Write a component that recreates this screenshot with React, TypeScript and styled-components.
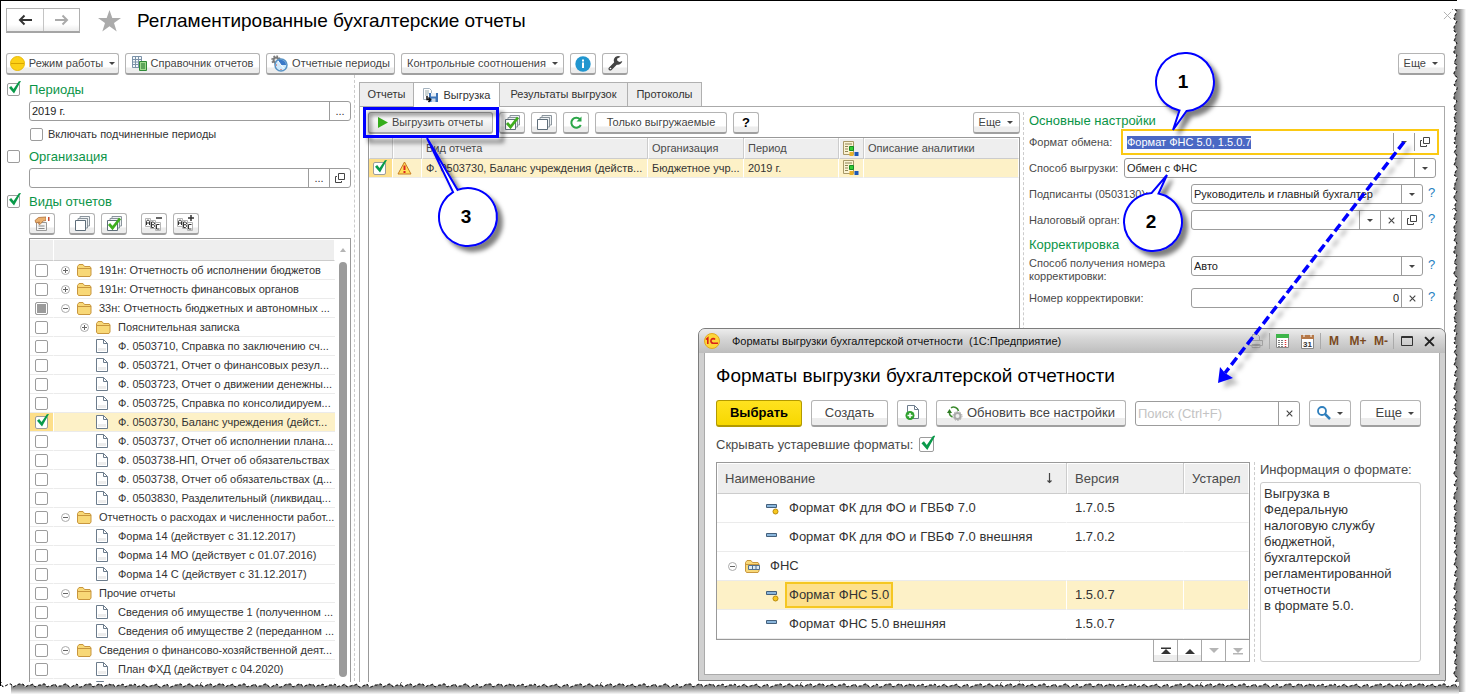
import React, { useEffect, useRef } from 'react';
import styled, { createGlobalStyle, css } from 'styled-components';

const GlobalStyle = createGlobalStyle`
  * { box-sizing: border-box; }
  body {
    margin: 0;
    background: #fff;
    color: #333;
    font: 11px/13px "Liberation Sans", Arial, sans-serif;
  }
  button, input, select, textarea { font: inherit; color: inherit; margin: 0; }
  svg { display: block; flex: none; }
`;

/* ---------- shell ---------- */

const Page = styled.div`
  position: relative;
  height: 100vh;
  overflow: hidden;
`;

const Sheet = styled.div`
  display: flex;
  flex-direction: column;
  height: calc(100% - 9px);
  margin-right: 9px;
  border-top: 1px solid #000;
  border-left: 1px solid #000;
  overflow: hidden;
`;

const Header = styled.header`
  display: flex;
  align-items: center;
  height: 39px;
  margin-bottom: 13px;
  padding: 0 5px;
`;

const NavGroup = styled.div`
  display: flex;
  height: 25px;
  margin-right: 18px;
  border: 1px solid #b0b0b0;
  border-bottom: 2px solid #a5a5a5;
`;

const NavButton = styled.button`
  width: 36px;
  padding: 0;
  display: grid;
  place-items: center;
  border: 0;
  background: linear-gradient(#fff 70%, #ececec);
  & + & { border-left: 1px solid #c4c4c4; }
`;

const PageTitle = styled.h1`
  flex: 1;
  margin: 0 0 0 16px;
  font-size: 19px;
  line-height: 24px;
  font-weight: normal;
  color: #000;
`;

const CloseButton = styled.button`
  align-self: flex-start;
  margin-top: 10px;
  padding: 0;
  border: 0;
  background: none;
`;

const Toolbar = styled.div<{ $gap?: number; $padding?: string }>`
  display: flex;
  flex: none;
  gap: ${p => p.$gap ?? 6}px;
  padding: ${p => p.$padding ?? '0'};
`;

const Spacer = styled.div`
  flex: 1;
`;

const Button = styled.button<{ $width?: number; $large?: boolean; $primary?: boolean; $pressed?: boolean }>`
  display: flex;
  flex: none;
  align-items: center;
  justify-content: center;
  gap: 4px;
  width: ${p => p.$width ?? 26}px;
  height: ${p => (p.$large ? 27 : 22)}px;
  padding: 0;
  white-space: nowrap;
  color: #444;
  border: 1px solid #b4b4b4;
  border-bottom: 2px solid #a0a0a0;
  border-radius: 3px;
  background: linear-gradient(#fff 70%, #ededed 72%);
  font-size: ${p => (p.$large ? 13 : 11)}px;
  ${p => p.$primary && css`
    color: #000;
    font-weight: bold;
    border-color: #b39a00;
    background: linear-gradient(#ffe21f, #f7d800);
  `}
  ${p => p.$pressed && css`
    background: linear-gradient(#e6e6e6, #fafafa 30%, #e2e2e2);
    border-color: #a8a8a8;
  `}
`;

const MoreButton = styled(Button)`
  justify-content: flex-end;
  padding-right: 6px;
`;

const Caret = styled.span`
  width: 0;
  height: 0;
  margin-left: 2px;
  border: 3px solid transparent;
  border-top-color: #444;
  border-bottom: 0;
`;

const Body = styled.main`
  display: flex;
  flex: 1;
  min-height: 0;
`;

/* ---------- filter column ---------- */

const Filters = styled.aside`
  display: flex;
  flex: none;
  flex-direction: column;
  width: 354px;
  padding: 5px 3px 0 6px;
  border-right: 1px dashed #ccc;
`;

const Indented = styled.div`
  display: flex;
  flex: none;
  flex-direction: column;
  margin-left: 22px;
  gap: 4px;
`;

const CheckLabel = styled.label<{ $heading?: boolean }>`
  display: flex;
  flex: none;
  align-items: center;
  height: 18px;
  gap: ${p => (p.$heading ? 9 : 5)}px;
  padding-left: ${p => (p.$heading ? 0 : 1)}px;
  ${p => p.$heading && css`
    color: #0a9447;
    font-size: 13px;
    margin-bottom: 3px;
    * + & { margin-top: 4px; }
  `}
`;

const Check = styled.input.attrs({ type: 'checkbox' })<{ $big?: boolean; $partial?: boolean }>`
  appearance: none;
  position: relative;
  flex: none;
  width: ${p => (p.$big ? 15 : 13)}px;
  height: ${p => (p.$big ? 15 : 13)}px;
  border: 1px solid #9c9c9c;
  border-radius: 2px;
  background: ${p => (p.$partial ? '#9b9b9b' : '#fff')};
  box-shadow: ${p => (p.$partial ? 'inset 0 0 0 1px #fff' : 'none')};
  &:checked::after {
    content: '';
    position: absolute;
    inset: -3px -2px 1px 1px;
    background: #0a9a4a;
    clip-path: polygon(0 55%, 18% 42%, 38% 66%, 82% 6%, 100% 4%, 42% 100%);
  }
`;

const Field = styled.div<{ $focus?: boolean }>`
  display: flex;
  flex: 1 1 auto;
  min-width: 0;
  height: 20px;
  border: 1px solid ${p => (p.$focus ? 'transparent' : '#9c9c9c')};
  border-radius: ${p => (p.$focus ? 0 : 3)}px;
  background: #fff;
  outline: ${p => (p.$focus ? '2px solid #fbc913' : 'none')};
  outline-offset: 1px;
`;

const textControl = css`
  flex: 1;
  min-width: 0;
  width: 0;
  padding: 0 2px;
  border: 0;
  outline: 0;
  background: none;
  color: #222;
`;

const TextInput = styled.input<{ $right?: boolean }>`
  ${textControl}
  text-align: ${p => (p.$right ? 'right' : 'left')};
  &::selection { background: #4a68c4; color: #fff; }
  &::placeholder { color: #c3c3c3; opacity: 1; }
`;

const Select = styled.select`
  ${textControl}
  appearance: none;
`;

const FieldButton = styled.button`
  display: grid;
  flex: none;
  place-items: center;
  width: 21px;
  padding: 0;
  border: 0;
  border-left: 1px solid #9c9c9c;
  background: none;
  color: #333;
  ${Caret} { margin: 0; }
`;

const TreeBox = styled.div`
  display: flex;
  flex: 1 0 auto;
  margin: 3px 0 0 22px;
  border: 1px solid #999;
  border-bottom: 0;
  height: 0;
`;

const TreeTable = styled.table`
  flex: 1;
  align-self: flex-start;
  table-layout: fixed;
  border-collapse: separate;
  border-spacing: 0;
  white-space: nowrap;
  th {
    height: 22px;
    padding: 0;
    background: #eee;
    border: 1px solid #fff;
    border-bottom: 1px solid #ccc;
    border-left: 0;
  }
  th:first-child { width: 24px; box-shadow: 1px 0 #ccc; }
  td {
    height: 19px;
    padding: 0;
    overflow: hidden;
    border-bottom: 1px solid #ebebeb;
  }
`;

const TreeRow = styled.tr<{ $selected?: boolean }>`
  background: ${p => (p.$selected ? '#fdf1c7' : 'transparent')};
  td:first-child {
    padding-left: 5px;
    border-right: 1px solid #fff;
    background: ${p => (p.$selected ? '#fddf8a' : 'transparent')};
  }
`;

const TreeCell = styled.div<{ $level: number }>`
  display: flex;
  align-items: center;
  height: 18px;
  padding-left: ${p => 7 + p.$level * 19}px;
`;

const Slot = styled.span<{ $width: number }>`
  flex: none;
  width: ${p => p.$width}px;
`;

const CheckHolder = styled.div`
  display: flex;
  align-items: center;
  height: 18px;
`;

const Scrollbar = styled.div`
  display: flex;
  flex: none;
  flex-direction: column;
  align-items: center;
  gap: 10px;
  width: 15px;
  padding: 9px 0 0;
`;

const ScrollUp = styled.span`
  border: 3px solid transparent;
  border-top: 0;
  border-bottom: 4px solid #b5b5b5;
`;

const ScrollThumb = styled.span`
  flex: 1;
  width: 8px;
  margin-bottom: 9px;
  border-radius: 4px;
  background: #9b9b9b;
`;

/* ---------- tabs and work area ---------- */

const Workspace = styled.section`
  display: flex;
  flex: 1;
  flex-direction: column;
  min-width: 0;
  margin: 7px 12px 0 4px;
`;

const TabList = styled.div`
  display: flex;
  flex: none;
  height: 24px;
`;

const Tab = styled.button<{ $active?: boolean; $width: number }>`
  display: flex;
  align-items: center;
  justify-content: center;
  gap: 6px;
  width: ${p => p.$width}px;
  height: ${p => (p.$active ? 25 : 24)}px;
  padding: 0;
  border: 1px solid #b0b0b0;
  border-bottom: 0;
  margin-left: -1px;
  background: ${p => (p.$active ? '#fff' : '#eee')};
  color: #333;
  z-index: ${p => (p.$active ? 1 : 0)};
  &:first-child { margin-left: 0; }
`;

const TabPanel = styled.div`
  display: flex;
  flex: 1;
  min-height: 0;
  border: 1px solid #aaa;
  border-bottom: 0;
`;

const Work = styled.div`
  display: flex;
  flex: 1;
  flex-direction: column;
  min-width: 0;
  margin-top: 5px;
  padding: 0 3px 0 8px;
  border-right: 1px dashed #ccc;
`;

const GridBox = styled.div<{ $open?: boolean }>`
  flex: ${p => (p.$open ? 1 : 'none')};
  border: 1px solid #999;
  border-bottom-width: ${p => (p.$open ? 0 : 1)}px;
`;

const DataTable = styled.table<{ $large?: boolean }>`
  width: 100%;
  table-layout: fixed;
  border-collapse: separate;
  border-spacing: 0;
  white-space: nowrap;
  font-size: ${p => (p.$large ? 13 : 11)}px;
  th, td { overflow: hidden; text-align: left; }
  th {
    height: ${p => (p.$large ? 31 : 21)}px;
    padding: 0 ${p => (p.$large ? 7 : 3)}px;
    font-weight: normal;
    color: #4a4a4a;
    background: #eee;
    border: 1px solid #fff;
    border-bottom-color: #ccc;
  }
  th + th { box-shadow: -1px 0 #ccc; }
  td {
    height: ${p => (p.$large ? 29 : 19)}px;
    padding: 0 ${p => (p.$large ? 8 : 3)}px 0 4px;
    border-right: 1px solid transparent;
    border-bottom: 1px solid #ebebeb;
  }
  td:not(:first-child) { padding-left: ${p => (p.$large ? 8 : 4)}px; }
`;

const Col = styled.col<{ $width?: number }>`
  width: ${p => (p.$width ? `${p.$width}px` : 'auto')};
`;

const DataRow = styled.tr<{ $selected?: boolean }>`
  ${p => p.$selected && css`
    td { background: #fdf1c7; border-right-color: #fff; }
  `}
`;

const MarkCell = styled.td`
  && { background: #fddf8a; }
`;

const HeadContent = styled.span`
  display: flex;
  justify-content: space-between;
  padding-right: 6px;
`;

/* ---------- settings ---------- */

const Settings = styled.form`
  display: flex;
  flex: none;
  flex-direction: column;
  gap: 6px;
  width: 420px;
  padding: 5px 8px 0 5px;
`;

const SettingsHeading = styled.h2`
  margin: 0 0 -4px;
  font-size: 13px;
  line-height: 18px;
  font-weight: normal;
  color: #0a9447;
`;

const SettingRow = styled.div`
  display: flex;
  flex: none;
  align-items: flex-start;
  height: 20px;
`;

const TallRow = styled(SettingRow)`
  height: 26px;
`;

const SettingLabel = styled.label<{ $wide?: boolean }>`
  flex: none;
  width: ${p => (p.$wide ? 162 : 95)}px;
  padding: 4px ${p => (p.$wide ? 20 : 0)}px 0 0;
  white-space: nowrap;
  color: #4a4a4a;
  ${TallRow} & {
    padding-top: 1px;
    white-space: normal;
  }
`;

const HelpLink = styled.a`
  width: 13px;
  flex: none;
  padding-left: 5px;
  font-size: 13px;
  line-height: 18px;
  color: #1f7fc1;
  text-decoration: none;
`;

/* ---------- format dialog ---------- */

const Dialog = styled.div`
  position: absolute;
  left: 698px;
  top: 328px;
  width: 748px;
  padding: 0 5px 5px;
  border: 1px solid #7d7d7d;
  border-radius: 7px 7px 0 0;
  background: #d0d0d0;
`;

const TitleBar = styled.div`
  display: flex;
  align-items: center;
  height: 24px;
  margin: 0 -5px;
  padding: 0 7px 0 5px;
  border-radius: 6px 6px 0 0;
  background: linear-gradient(#ececec, #d6d6d6 40%, #bdbdbd);
  color: #111;
  white-space: pre;
`;

const TitleText = styled.span`
  flex: 1;
  margin-left: 12px;
`;

const TitleButton = styled.button<{ $width: number }>`
  display: grid;
  flex: none;
  place-items: center;
  width: ${p => p.$width}px;
  height: 20px;
  padding: 0;
  border: 0;
  background: none;
  color: #7a4a1e;
  font-weight: bold;
  font-size: 12px;
`;

const TitleSeparator = styled.span`
  width: 1px;
  height: 16px;
  background: #aaa;
`;

const DialogBody = styled.div`
  display: flex;
  flex-direction: column;
  padding: 10px 18px 12px 11px;
  border: 1px solid #aaa;
  border-top: 0;
  background: #fff;
  font-size: 13px;
  line-height: 16px;
`;

const DialogTitle = styled.h2`
  margin: 0 0 12px;
  font-size: 19px;
  line-height: 25px;
  font-weight: normal;
  color: #000;
`;

const SearchField = styled(Field)`
  height: 25px;
  margin-top: 1px;
`;

const HideOld = styled.label`
  display: flex;
  align-items: center;
  gap: 6px;
  height: 19px;
  margin: 8px 0;
  color: #4a4a4a;
`;

const Columns = styled.div`
  display: flex;
`;

const ListColumn = styled.div`
  flex: 1;
  min-width: 0;
  padding-right: 4px;
  border-right: 1px dashed #ccc;
`;

const InfoColumn = styled.label`
  display: flex;
  flex: none;
  flex-direction: column;
  gap: 4px;
  width: 166px;
  padding-left: 5px;
  color: #4a4a4a;
`;

const InfoText = styled.textarea`
  flex: 1;
  width: 100%;
  padding: 3px;
  border: 1px solid #ccc;
  border-radius: 3px;
  resize: none;
  outline: 0;
  overflow: hidden;
  color: #333;
`;

const FormatCell = styled.div<{ $group?: boolean }>`
  display: flex;
  align-items: center;
  height: 28px;
  padding-left: ${p => (p.$group ? 7 : 45)}px;
`;

const FormatName = styled.span<{ $active?: boolean }>`
  display: flex;
  align-items: center;
  height: 26px;
  padding: 0 2px;
  border: 2px solid ${p => (p.$active ? '#f5c722' : 'transparent')};
  background: ${p => (p.$active ? '#fde08c' : 'transparent')};
`;

const PagerBar = styled.div`
  display: flex;
  justify-content: flex-end;
`;

const PagerButton = styled.button`
  display: grid;
  place-items: center;
  width: 25px;
  height: 22px;
  margin-left: -1px;
  padding: 0;
  border: 1px solid #a8a8a8;
  border-top: 0;
  background: linear-gradient(#fff 70%, #ededed 72%);
  color: #333;
  &:disabled { color: #b5b5b5; background: #fff; }
`;

/* ---------- overlays ---------- */

const Annotations = styled.svg`
  position: absolute;
  left: 0;
  top: 0;
  pointer-events: none;
`;

const TornRight = styled.svg`
  position: absolute;
  top: 9px;
  right: 0;
  height: calc(100% - 12px);
`;

const TornBottom = styled.svg`
  position: absolute;
  left: 1px;
  bottom: 0;
  width: calc(100% - 8px);
`;

/* ---------- icons ---------- */

const ArrowIcon = ({ back }: { back?: boolean }) => (
  <svg width="15" height="12" viewBox="0 0 15 12" fill="none" stroke={back ? '#333' : '#aaa'} strokeWidth="2">
    {back ? <path d="M14 6H2M6.500 1.500L2 6l4.500 4.500" /> : <path d="M1 6h12M8.500 1.500L13 6l-4.500 4.500" />}
  </svg>
);

const StarIcon = () => (
  <svg width="23" height="22" viewBox="0 0 23 22" fill="#ababab">
    <path d="M11.500 0l2.800 8H23l-7 5 2.700 8.500-7.200-5.200-7.200 5.200L7 13 0 8h8.700z" />
  </svg>
);

const CrossIcon = ({ size = 9, color = '#aaa', weight = 1 }: { size?: number; color?: string; weight?: number }) => (
  <svg width={size} height={size} viewBox="0 0 10 10" stroke={color} strokeWidth={weight}>
    <path d="M1 1l8 8M9 1l-8 8" />
  </svg>
);

const ModeIcon = () => (
  <svg width="15" height="15" viewBox="0 0 15 15">
    <circle cx="7.500" cy="7.500" r="7" fill="#fcd116" stroke="#e9b908" />
    <path d="M1 7.500h13" stroke="#d9a400" />
  </svg>
);

const CatalogIcon = () => (
  <svg width="15" height="15" viewBox="0 0 15 15">
    <path d="M.5.5h9v11h-9zM3.500.5v11M.5 3.500h9M.5 6h9M.5 8.500h9M6.500.5v11" fill="#f4f8fb" stroke="#7b92a8" />
    <path d="M7.500 5.500h7v9h-7z" fill="#9fdc8f" stroke="#2f8a37" />
    <path d="M9 8h4M9 10h4M9 12h4" stroke="#1f6f2a" />
  </svg>
);

const PeriodsIcon = () => (
  <svg width="17" height="17" viewBox="0 0 17 17">
    <circle cx="5" cy="5" r="2.500" fill="#e4e4e4" stroke="#7a7a7a" strokeWidth="2" />
    <circle cx="5" cy="5" r="4" fill="none" stroke="#7a7a7a" strokeWidth="1.500" strokeDasharray="1.600 1.540" />
    <circle cx="10" cy="10" r="6" fill="#cfe9fb" stroke="#5a93c4" strokeWidth="1.500" />
    <path d="M10 10L7 5.500a5.300 5.300 0 0 1 8 4.500z" fill="#3a78c8" />
    <path d="M7 6l3 4 3 3.500" stroke="#fff" fill="none" />
    <path d="M5 10h1M10 14v1" stroke="#d8432e" />
  </svg>
);

const InfoIcon = () => (
  <svg width="16" height="16" viewBox="0 0 16 16">
    <circle cx="8" cy="8" r="7.700" fill="#2196cf" />
    <path d="M7 3.500h2v2H7zM7 6.500h2V12H7z" fill="#fff" />
  </svg>
);

const WrenchIcon = () => (
  <svg width="15" height="15" viewBox="0 0 15 15">
    <path d="M2.300 12.700l6.200-6.200" stroke="#444" strokeWidth="3.600" strokeLinecap="round" />
    <path d="M12.500.8a4.300 4.300 0 1 0 1.800 4.300l-2.600.9-2.300-.9-.4-2.400z" fill="#444" />
    <circle cx="2.500" cy="12.500" r=".8" fill="#fff" />
  </svg>
);

const OpenIcon = () => (
  <svg width="10" height="10" viewBox="0 0 10 10" fill="none" stroke="#444">
    <path d="M3.500.5h6v6h-6zM2 3.500H.5v6h6V8" />
  </svg>
);

const EditIcon = () => (
  <svg width="16" height="16" viewBox="0 0 16 16">
    <path d="M2.500 6.500h10v8h-10z" fill="#f4f4f4" stroke="#999" />
    <path d="M4.500 10h6M4.500 12.500h6" stroke="#888" />
    <path d="M1 4.500L4.500 1.500l7.500-.5v3.500L9 5 6 8.500 4.500 8l1-2L2 7z" fill="#eab06e" stroke="#b0703a" strokeWidth=".8" />
    <path d="M12 1h1.500v4H12z" fill="#fff" />
    <path d="M14 1h1.500v4H14z" fill="#c14b32" />
  </svg>
);

const SheetsIcon = ({ checked }: { checked?: boolean }) => (
  <svg width="17" height="17" viewBox="0 0 17 17">
    <path d="M6 1.500h9.500V11h-2V3.500H6z" fill="#eef1f3" stroke="#8a949c" />
    <path d="M4 3.500h9.500V13h-2V5.500H4z" fill="#eef1f3" stroke="#8a949c" />
    <path d="M1.500 5.500h10v10h-10z" fill="#fff" stroke="#5f6e7a" />
    {checked && <path d="M3 9l3.500 4L14 3.500" fill="none" stroke="#3fae1f" strokeWidth="2.800" />}
  </svg>
);

const LettersIcon = ({ plus }: { plus?: boolean }) => (
  <svg width="18" height="17" viewBox="0 0 18 17">
    <path d="M.5 3.500h5v8h-5zM5.500 5.500h5v8h-5zM10.500 7.500h5v8h-5z" fill="#fff" stroke="#b5b5b5" />
    <path d="M1.500 10V6.500l1-1.500h1l1 1.500V10M1.500 8h3M6.500 7v5.500h2l1-1v-1l-1-.8 1-.8V8l-1-1zM6.500 9.700h2M14.500 9.500h-3v4.500h3" fill="none" stroke="#333" />
    <path d={plus ? 'M14 0v6M11 3h6' : 'M11 3h6'} stroke="#333" strokeWidth="1.500" />
  </svg>
);

const ToggleIcon = ({ open }: { open?: boolean }) => (
  <svg width="9" height="9" viewBox="0 0 9 9" fill="none">
    <circle cx="4.500" cy="4.500" r="4" stroke="#aaa" />
    <path d={open ? 'M2 4.500h5' : 'M2 4.500h5M4.500 2v5'} stroke="#666" />
  </svg>
);

const FolderIcon = ({ marked }: { marked?: boolean }) => (
  <svg width="15" height="13" viewBox="0 0 15 13">
    <path d="M.5 11V2.500l1.500-2h4l1.500 2h5.500l1 1.500v7l-1 1.500H1.500z" fill="#f8d877" stroke="#c8963e" />
    <path d="M1 4.500h13" stroke="#c8963e" />
    {marked && <path d="M3.500 5.500h11v4h-11zM7.500 5.500v4M11 5.500v4" fill="#dcebf5" stroke="#52718e" />}
  </svg>
);

const FileIcon = () => (
  <svg width="12" height="14" viewBox="0 0 12 14" stroke="#6c7c8c">
    <path d="M.5.5h7l4 4v9H.5z" fill="#fff" />
    <path d="M7.500.5v4h4" fill="none" />
    <path d="M2 9h8v3H2z" fill="#ededed" stroke="none" />
  </svg>
);

const UploadIcon = () => (
  <svg width="15" height="15" viewBox="0 0 15 15">
    <path d="M.5.500h6l2 2v9h-8z" fill="#fff" stroke="#a5b3bf" />
    <path d="M2 3h4M2 5h4M2 7h3" stroke="#9aa" />
    <path d="M6 5h9v9H6z" fill="#3d74b8" />
    <path d="M8 5h5v3.500H8z" fill="#e7eef6" />
    <path d="M8.500 10.500h4V14h-4z" fill="#c7d8ea" />
    <path d="M4 8v3.500h3M5.500 9.500l2 2-2 2.500" fill="none" stroke="#111" strokeWidth="1.500" />
  </svg>
);

const PlayIcon = () => (
  <svg width="10" height="11" viewBox="0 0 10 11"><path d="M0 0l10 5.500L0 11z" fill="#35ad1c" /></svg>
);

const RefreshIcon = () => (
  <svg width="14" height="14" viewBox="0 0 14 14" fill="none">
    <path d="M11 3.300A5 5 0 1 0 11.800 9" stroke="#2ba648" strokeWidth="2" />
    <path d="M12.500.5v5h-5z" fill="#2ba648" />
  </svg>
);

const WarningIcon = () => (
  <svg width="15" height="14" viewBox="0 0 15 14">
    <path d="M7.500 1L14 13H1z" fill="#ffdf5a" stroke="#c77a22" strokeLinejoin="round" />
    <path d="M7.500 4.500v4.500M7.500 10v2" stroke="#d22" strokeWidth="2" />
  </svg>
);

const AnalyticsIcon = () => (
  <svg width="16" height="16" viewBox="0 0 16 16">
    <path d="M.5.5h10v13H.5z" fill="#fbf3d2" stroke="#a99968" />
    <path d="M2 3h7M2 5.500h3M2 8h3M2 10.500h3" stroke="#8e8357" />
    <path d="M6.500 5.500h4v4h-4z" fill="#3c3" stroke="#178a22" />
    <path d="M6.500 11h4v4h-4z" fill="#e8b028" />
    <path d="M11.500 11h4v4h-4z" fill="#1d57b5" />
  </svg>
);

const LogoIcon = () => (
  <svg width="16" height="16" viewBox="0 0 16 16" fill="none" stroke="#d8201a" strokeWidth="1.600">
    <circle cx="8" cy="8" r="7.500" fill="#fdd63a" stroke="#e2a921" strokeWidth="1" />
    <path d="M2 6.500l1.800-1.500v6M11 6.500A2.300 2.300 0 1 0 9 10.200h5" />
  </svg>
);

const PrinterIcon = () => (
  <svg width="14" height="14" viewBox="0 0 14 14" fill="#d0d0d0" stroke="#a5a5a5">
    <path d="M3.500.5h5l2 2v4h-7zM.5 6.500h13v5H.5zM3 10.500h8v3H3z" />
  </svg>
);

const CalculatorIcon = () => (
  <svg width="13" height="14" viewBox="0 0 13 14">
    <path d="M.5.500h12v13H.500z" fill="#fff" stroke="#888" />
    <path d="M0 0h13v4H0z" fill="#3db54a" />
    <path d="M3 6v7M6 6v7" stroke="#555" strokeWidth="1.500" strokeDasharray="1 1" />
    <path d="M9.500 6v7" stroke="#d33" strokeWidth="1.500" strokeDasharray="1 1" />
  </svg>
);

const CalendarIcon = () => (
  <svg width="13" height="15" viewBox="0 0 13 15">
    <path d="M.5 1.500h12v13H.5z" fill="#fff" stroke="#888" />
    <path d="M0 1h13v4H0z" fill="#b57848" />
    <path d="M3 0v3M10 0v3" stroke="#fff" />
    <text x="6.500" y="13" fontSize="8" textAnchor="middle" fill="#333">31</text>
  </svg>
);

const MaximizeIcon = () => (
  <svg width="12" height="10" viewBox="0 0 12 10" fill="none" stroke="#333"><path d="M.5.5h11v9H.5zM.5 1.500h11" /></svg>
);

const AddFileIcon = () => (
  <svg width="14" height="16" viewBox="0 0 14 16">
    <path d="M2.500.5h7l4 4v9h-11z" fill="#fff" stroke="#6c7c8c" />
    <path d="M9.500.5v4h4" fill="none" stroke="#6c7c8c" />
    <circle cx="5" cy="10.500" r="4.500" fill="#2ea12e" />
    <path d="M5 8v5M2.500 10.500h5" stroke="#fff" strokeWidth="1.500" />
  </svg>
);

const UpdateIcon = () => (
  <svg width="16" height="15" viewBox="0 0 16 15" fill="none">
    <path d="M4 1.800A5 5 0 0 1 11.500 5M2.500 5.500A5 5 0 0 0 5.500 11" stroke="#3c8a2e" strokeWidth="1.500" />
    <path d="M0 7l2.500-4L5 7z" fill="#2d7a22" />
    <circle cx="10.500" cy="10" r="3" fill="#eee" stroke="#aaa" strokeWidth="2" />
    <circle cx="10.500" cy="10" r="4.500" stroke="#aaa" strokeDasharray="1.500 1.330" />
  </svg>
);

const SearchIcon = () => (
  <svg width="14" height="14" viewBox="0 0 14 14" fill="none" stroke="#2f7fbd">
    <circle cx="5" cy="5" r="4" strokeWidth="1.800" />
    <path d="M8 8l5 5" strokeWidth="2.500" />
  </svg>
);

const SortIcon = () => (
  <svg width="7" height="14" viewBox="0 0 7 14" fill="none" stroke="#444"><path d="M3.500 2v9.500M1.500 9.500l2 2 2-2" strokeWidth="1.200" /></svg>
);

const ItemIcon = ({ dot }: { dot?: boolean }) => (
  <svg width="13" height="13" viewBox="0 0 13 13">
    <path d="M.5 2.500h10v3H.5z" fill="#8ab6dc" stroke="#44607c" />
    {dot && <circle cx="9.500" cy="9.500" r="2.500" fill="#f7c71e" stroke="#b98a0b" />}
  </svg>
);

const PagerIcon = ({ down, edge }: { down?: boolean; edge?: boolean }) => (
  <svg width="10" height="8" viewBox="0 0 10 8" fill="currentColor">
    {down ? <path d="M0 1h10L5 6z" /> : <path d="M0 7h10L5 2z" />}
    {edge && <path d={down ? 'M0 6h10v1.500H0z' : 'M0 .5h10V2H0z'} />}
  </svg>
);

/* ---------- data ---------- */

type Node = { text: string; level: number; kind: 'open' | 'closed' | 'file'; state?: 'on' | 'partial' };

const tree: Node[] = [
  { text: '191н: Отчетность об исполнении бюджетов', level: 0, kind: 'closed' },
  { text: '191н: Отчетность финансовых органов', level: 0, kind: 'closed' },
  { text: '33н: Отчетность бюджетных и автономных ...', level: 0, kind: 'open', state: 'partial' },
  { text: 'Пояснительная записка', level: 1, kind: 'closed' },
  { text: 'Ф. 0503710, Справка по заключению сч...', level: 1, kind: 'file' },
  { text: 'Ф. 0503721, Отчет о финансовых резул...', level: 1, kind: 'file' },
  { text: 'Ф. 0503723, Отчет о движении денежны...', level: 1, kind: 'file' },
  { text: 'Ф. 0503725, Справка по консолидируем...', level: 1, kind: 'file' },
  { text: 'Ф. 0503730, Баланс учреждения (дейст...', level: 1, kind: 'file', state: 'on' },
  { text: 'Ф. 0503737, Отчет об исполнении плана...', level: 1, kind: 'file' },
  { text: 'Ф. 0503738-НП, Отчет об обязательствах', level: 1, kind: 'file' },
  { text: 'Ф. 0503738, Отчет об обязательствах (д...', level: 1, kind: 'file' },
  { text: 'Ф. 0503830, Разделительный (ликвидац...', level: 1, kind: 'file' },
  { text: 'Отчетность о расходах и численности работ...', level: 0, kind: 'open' },
  { text: 'Форма 14 (действует с 31.12.2017)', level: 1, kind: 'file' },
  { text: 'Форма 14 МО (действует с 01.07.2016)', level: 1, kind: 'file' },
  { text: 'Форма 14 С (действует с 31.12.2017)', level: 1, kind: 'file' },
  { text: 'Прочие отчеты', level: 0, kind: 'open' },
  { text: 'Сведения об имуществе 1 (полученном ...', level: 1, kind: 'file' },
  { text: 'Сведения об имуществе 2 (переданном ...', level: 1, kind: 'file' },
  { text: 'Сведения о финансово-хозяйственной деят...', level: 0, kind: 'open' },
  { text: 'План ФХД (действует с 04.2020)', level: 1, kind: 'file' },
  { text: 'План ФХД (действует с 01.2019)', level: 1, kind: 'file' },
];

const formats = [
  { name: 'Формат ФК для ФО и ГВБФ 7.0', version: '1.7.0.5', dot: true },
  { name: 'Формат ФК для ФО и ГВБФ 7.0 внешняя', version: '1.7.0.2' },
  { name: 'ФНС', version: '', group: true },
  { name: 'Формат ФНС 5.0', version: '1.5.0.7', dot: true, selected: true },
  { name: 'Формат ФНС 5.0 внешняя', version: '1.5.0.7' },
];

/* Balloon: centre, tip of the tail, and the two angles (degrees) where the tail leaves the circle. */
const callouts = [
  { n: '1', cx: 1185, cy: 82, tip: '1173 130', from: 101, to: 87 },
  { n: '2', cx: 1153, cy: 222, tip: '1167 175', from: -79, to: -93 },
  { n: '3', cx: 468, cy: 217, tip: '427 138', from: -111, to: -121 },
];

const RADIUS = 29;

const balloonPath = (c: (typeof callouts)[number]) => {
  const at = (deg: number) => {
    const a = (deg * Math.PI) / 180;
    return `${(c.cx + RADIUS * Math.cos(a)).toFixed(2)} ${(c.cy + RADIUS * Math.sin(a)).toFixed(2)}`;
  };
  return `M${at(c.to)}L${c.tip}L${at(c.from)}A${RADIUS} ${RADIUS} 0 1 1 ${at(c.to)}z`;
};

const infoText = 'Выгрузка в\nФедеральную\nналоговую службу\nбюджетной,\nбухгалтерской\nрегламентированной\nотчетности\nв формате 5.0.';

/* Jagged edge of the torn sheet: offsets along a 2-pixel step. */
const jag = (i: number) => 2 + ((i * 7 + (i % 5) * 3 + (i % 11)) % 4);
const steps = Array.from({ length: 100 }, (_, i) => i);
const tearDown = steps.map(i => `L${jag(i)} ${i * 2}`).join('') + 'L3 200';
const tearAcross = steps.map(i => `L${i * 2} ${jag(i)}`).join('') + 'L200 3';

/* ---------- sections ---------- */

const TreeCheck = ({ node }: { node: Node }) => (
  <CheckHolder>
    <Check aria-label={node.text} $partial={node.state === 'partial'} defaultChecked={node.state === 'on'} />
  </CheckHolder>
);

const FilterColumn = () => (
  <Filters>
    <CheckLabel $heading><Check defaultChecked />Периоды</CheckLabel>
    <Indented>
      <Field>
        <TextInput aria-label="Период" defaultValue="2019 г." />
        <FieldButton>...</FieldButton>
      </Field>
      <CheckLabel><Check />Включать подчиненные периоды</CheckLabel>
    </Indented>
    <CheckLabel $heading><Check />Организация</CheckLabel>
    <Indented>
      <Field>
        <TextInput aria-label="Организация" />
        <FieldButton>...</FieldButton>
        <FieldButton aria-label="Открыть"><OpenIcon /></FieldButton>
      </Field>
    </Indented>
    <CheckLabel $heading><Check defaultChecked />Виды отчетов</CheckLabel>
    <Toolbar $padding="0 0 0 22px">
      <Button aria-label="Изменить"><EditIcon /></Button>
      <Slot $width={2} />
      <Button aria-label="Снять флажки"><SheetsIcon /></Button>
      <Button aria-label="Установить флажки"><SheetsIcon checked /></Button>
      <Slot $width={2} />
      <Button aria-label="Свернуть"><LettersIcon /></Button>
      <Button aria-label="Развернуть"><LettersIcon plus /></Button>
    </Toolbar>
    <TreeBox>
      <TreeTable>
        <thead><tr><th /><th /></tr></thead>
        <tbody>
          {tree.map(node => (
            <TreeRow key={node.text} $selected={node.state === 'on'}>
              <td><TreeCheck node={node} /></td>
              <td>
                <TreeCell $level={node.level}>
                  <Slot $width={16}>{node.kind !== 'file' && <ToggleIcon open={node.kind === 'open'} />}</Slot>
                  <Slot $width={22}>{node.kind === 'file' ? <FileIcon /> : <FolderIcon />}</Slot>
                  {node.text}
                </TreeCell>
              </td>
            </TreeRow>
          ))}
        </tbody>
      </TreeTable>
      <Scrollbar><ScrollUp /><ScrollThumb /></Scrollbar>
    </TreeBox>
  </Filters>
);

const HelpButton = styled(Button)`
  color: #000;
  font-size: 13px;
  font-weight: bold;
`;

const ReportList = () => (
  <Work>
    <Toolbar $padding="0 0 3px">
      <Button $width={125} $pressed><PlayIcon />Выгрузить отчеты</Button>
      <Button aria-label="Отметить все"><SheetsIcon checked /></Button>
      <Button aria-label="Снять отметки"><SheetsIcon /></Button>
      <Button aria-label="Обновить"><RefreshIcon /></Button>
      <Button $width={132}>Только выгружаемые</Button>
      <HelpButton>?</HelpButton>
      <Spacer />
      <MoreButton $width={47}>Еще<Caret /></MoreButton>
    </Toolbar>
    <GridBox $open>
      <DataTable>
        <colgroup>
          <Col $width={24} /><Col $width={29} /><Col $width={226} /><Col $width={96} />
          <Col $width={95} /><Col $width={25} /><Col />
        </colgroup>
        <thead>
          <tr>
            <th /><th /><th>Вид отчета</th><th>Организация</th><th>Период</th>
            <th><AnalyticsIcon /></th><th>Описание аналитики</th>
          </tr>
        </thead>
        <tbody>
          <DataRow $selected>
            <MarkCell><CheckHolder><Check aria-label="Ф. 0503730" defaultChecked /></CheckHolder></MarkCell>
            <td><WarningIcon /></td>
            <td>Ф. 0503730, Баланс учреждения (действ...</td>
            <td>Бюджетное учр...</td>
            <td>2019 г.</td>
            <td><AnalyticsIcon /></td>
            <td />
          </DataRow>
        </tbody>
      </DataTable>
    </GridBox>
  </Work>
);

const DropCell = () => <FieldButton type="button" aria-label="Выбрать из списка"><Caret /></FieldButton>;
const ClearCell = () => <FieldButton type="button" aria-label="Очистить"><CrossIcon size={7} color="#444" weight={1.6} /></FieldButton>;
const OpenCell = () => <FieldButton type="button" aria-label="Открыть"><OpenIcon /></FieldButton>;

const SettingsColumn = () => {
  const formatRef = useRef<HTMLInputElement>(null);
  useEffect(() => { formatRef.current?.focus(); formatRef.current?.select(); }, []);
  return (
    <Settings>
      <SettingsHeading>Основные настройки</SettingsHeading>
      <SettingRow>
        <SettingLabel htmlFor="format">Формат обмена:</SettingLabel>
        <Field $focus>
          <TextInput id="format" ref={formatRef} defaultValue="Формат ФНС 5.0, 1.5.0.7" />
          <DropCell /><OpenCell />
        </Field>
      </SettingRow>
      <SettingRow>
        <SettingLabel htmlFor="method">Способ выгрузки:</SettingLabel>
        <Field><Select id="method"><option>Обмен с ФНС</option></Select><DropCell /></Field>
      </SettingRow>
      <SettingRow>
        <SettingLabel $wide htmlFor="signers">Подписанты (0503130):</SettingLabel>
        <Field><Select id="signers"><option>Руководитель и главный бухгалтер</option></Select><DropCell /></Field>
        <HelpLink href="#signers">?</HelpLink>
      </SettingRow>
      <SettingRow>
        <SettingLabel $wide htmlFor="tax">Налоговый орган:</SettingLabel>
        <Field><TextInput id="tax" /><DropCell /><ClearCell /><OpenCell /></Field>
        <HelpLink href="#tax">?</HelpLink>
      </SettingRow>
      <SettingsHeading>Корректировка</SettingsHeading>
      <TallRow>
        <SettingLabel $wide htmlFor="source">Способ получения номера корректировки:</SettingLabel>
        <Field><Select id="source"><option>Авто</option></Select><DropCell /></Field>
        <HelpLink href="#source">?</HelpLink>
      </TallRow>
      <SettingRow>
        <SettingLabel $wide htmlFor="number">Номер корректировки:</SettingLabel>
        <Field><TextInput id="number" $right defaultValue="0" /><ClearCell /></Field>
        <HelpLink href="#number">?</HelpLink>
      </SettingRow>
    </Settings>
  );
};

const FormatDialog = () => (
  <Dialog role="dialog" aria-label="Форматы выгрузки бухгалтерской отчетности">
    <TitleBar>
      <LogoIcon />
      <TitleText>Форматы выгрузки бухгалтерской отчетности  (1С:Предприятие)</TitleText>
      <TitleButton $width={26} aria-label="Печать"><PrinterIcon /></TitleButton>
      <TitleSeparator />
      <TitleButton $width={24} aria-label="Калькулятор"><CalculatorIcon /></TitleButton>
      <TitleButton $width={26} aria-label="Календарь"><CalendarIcon /></TitleButton>
      <TitleSeparator />
      <TitleButton $width={26}>M</TitleButton>
      <TitleButton $width={22}>M+</TitleButton>
      <TitleButton $width={24}>M-</TitleButton>
      <TitleSeparator />
      <TitleButton $width={26} aria-label="Развернуть"><MaximizeIcon /></TitleButton>
      <TitleButton $width={18} aria-label="Закрыть"><CrossIcon size={11} color="#222" weight={1.8} /></TitleButton>
    </TitleBar>
    <DialogBody>
      <DialogTitle>Форматы выгрузки бухгалтерской отчетности</DialogTitle>
      <Toolbar $gap={9}>
        <Button $large $primary $width={86}>Выбрать</Button>
        <Button $large $width={77}>Создать</Button>
        <Button $large $width={30} aria-label="Создать копированием"><AddFileIcon /></Button>
        <Button $large $width={190}><UpdateIcon />Обновить все настройки</Button>
        <SearchField>
          <TextInput aria-label="Поиск" placeholder="Поиск (Ctrl+F)" />
          <ClearCell />
        </SearchField>
        <Button $large $width={42} aria-label="Найти"><SearchIcon /><Caret /></Button>
        <MoreButton $large $width={61}>Еще<Caret /></MoreButton>
      </Toolbar>
      <HideOld>Скрывать устаревшие форматы:<Check $big defaultChecked /></HideOld>
      <Columns>
        <ListColumn>
          <GridBox>
            <DataTable $large>
              <colgroup><Col /><Col $width={117} /><Col $width={65} /></colgroup>
              <thead>
                <tr><th><HeadContent>Наименование<SortIcon /></HeadContent></th><th>Версия</th><th>Устарел</th></tr>
              </thead>
              <tbody>
                {formats.map(f => (
                  <DataRow key={f.name} $selected={f.selected}>
                    <td>
                      <FormatCell $group={f.group}>
                        {f.group && <Slot $width={17}><ToggleIcon open /></Slot>}
                        <Slot $width={f.group ? 21 : 19}>{f.group ? <FolderIcon marked /> : <ItemIcon dot={f.dot} />}</Slot>
                        <FormatName $active={f.selected}>{f.name}</FormatName>
                      </FormatCell>
                    </td>
                    <td>{f.version}</td>
                    <td />
                  </DataRow>
                ))}
              </tbody>
            </DataTable>
          </GridBox>
          <PagerBar>
            <PagerButton aria-label="В начало"><PagerIcon edge /></PagerButton>
            <PagerButton aria-label="Вверх"><PagerIcon /></PagerButton>
            <PagerButton aria-label="Вниз" disabled><PagerIcon down /></PagerButton>
            <PagerButton aria-label="В конец" disabled><PagerIcon down edge /></PagerButton>
          </PagerBar>
        </ListColumn>
        <InfoColumn>
          Информация о формате:
          <InfoText readOnly defaultValue={infoText} />
        </InfoColumn>
      </Columns>
    </DialogBody>
  </Dialog>
);

const TornEdges = () => (
  <>
    <TornRight width="14">
      <defs>
        <linearGradient id="fadeRight"><stop offset=".25" stopColor="#7d7d7d" /><stop offset=".55" stopColor="#999" /><stop offset="1" stopColor="#fff" /></linearGradient>
        <pattern id="tearRight" width="14" height="200" patternUnits="userSpaceOnUse">
          <path d={`M-2 0${tearDown}L-2 200z`} fill="#fff" stroke="#000" strokeDasharray="3 2" />
        </pattern>
      </defs>
      <rect width="14" height="100%" fill="url(#fadeRight)" />
      <rect width="14" height="100%" fill="url(#tearRight)" />
    </TornRight>
    <TornBottom height="13">
      <defs>
        <linearGradient id="fadeBottom" x2="0" y2="1"><stop offset=".25" stopColor="#7d7d7d" /><stop offset=".5" stopColor="#999" /><stop offset=".95" stopColor="#fff" /></linearGradient>
        <pattern id="tearBottom" width="200" height="13" patternUnits="userSpaceOnUse">
          <path d={`M0 -2${tearAcross}L200 -2z`} fill="#fff" stroke="#000" strokeDasharray="3 2" />
        </pattern>
      </defs>
      <rect x="10" width="100%" height="13" fill="url(#fadeBottom)" />
      <rect width="100%" height="13" fill="url(#tearBottom)" />
    </TornBottom>
  </>
);

const AnnotationLayer = () => (
  <Annotations width="1466" height="695" viewBox="0 0 1466 695">
    <defs>
      <filter id="shadow" x="-30%" y="-30%" width="170%" height="170%">
        <feDropShadow dx="5" dy="5" stdDeviation="2" floodColor="#000" floodOpacity=".5" />
      </filter>
      <filter id="softShadow" filterUnits="userSpaceOnUse" x="1200" y="130" width="230" height="270">
        <feDropShadow dx="6" dy="5" stdDeviation="2" floodColor="#000" floodOpacity=".25" />
      </filter>
    </defs>
    <rect x="364.500" y="108.500" width="133" height="28" fill="none" stroke="#0000ff" strokeWidth="3" filter="url(#shadow)" />
    {callouts.map(c => (
      <g key={c.n}>
        <path d={balloonPath(c)} fill="#fff" stroke="#0000ff" strokeWidth="2" filter="url(#shadow)" />
        <text x={c.cx - 2} y={c.cy + 6} textAnchor="middle" fontSize="19" fontWeight="bold" fill="#000">{c.n}</text>
      </g>
    ))}
    <g filter="url(#softShadow)">
      <path d="M1404 142L1225 373" stroke="#0000ff" strokeWidth="3.500" strokeDasharray="9 4" />
      <path d="M1218 383L1220 367L1225 373L1233 378z" fill="#0000ff" />
    </g>
  </Annotations>
);

export default function App() {
  return (
    <Page>
      <GlobalStyle />
      <Sheet>
        <Header>
          <NavGroup>
            <NavButton aria-label="Назад"><ArrowIcon back /></NavButton>
            <NavButton aria-label="Вперед"><ArrowIcon /></NavButton>
          </NavGroup>
          <StarIcon />
          <PageTitle>Регламентированные бухгалтерские отчеты</PageTitle>
          <CloseButton aria-label="Закрыть"><CrossIcon /></CloseButton>
        </Header>
        <Toolbar $padding="0 12px 0 5px">
          <Button $width={113}><ModeIcon />Режим работы<Caret /></Button>
          <Button $width={135}><CatalogIcon />Справочник отчетов</Button>
          <Button $width={129}><PeriodsIcon />Отчетные периоды</Button>
          <Button $width={163}>Контрольные соотношения<Caret /></Button>
          <Button aria-label="Информация"><InfoIcon /></Button>
          <Button aria-label="Настройка"><WrenchIcon /></Button>
          <Spacer />
          <MoreButton $width={47}>Еще<Caret /></MoreButton>
        </Toolbar>
        <Body>
          <FilterColumn />
          <Workspace>
            <TabList role="tablist">
              <Tab role="tab" $width={55}>Отчеты</Tab>
              <Tab role="tab" $width={87} $active><UploadIcon />Выгрузка</Tab>
              <Tab role="tab" $width={129}>Результаты выгрузок</Tab>
              <Tab role="tab" $width={75}>Протоколы</Tab>
            </TabList>
            <TabPanel>
              <ReportList />
              <SettingsColumn />
            </TabPanel>
          </Workspace>
        </Body>
      </Sheet>
      <TornEdges />
      <FormatDialog />
      <AnnotationLayer />
    </Page>
  );
}
